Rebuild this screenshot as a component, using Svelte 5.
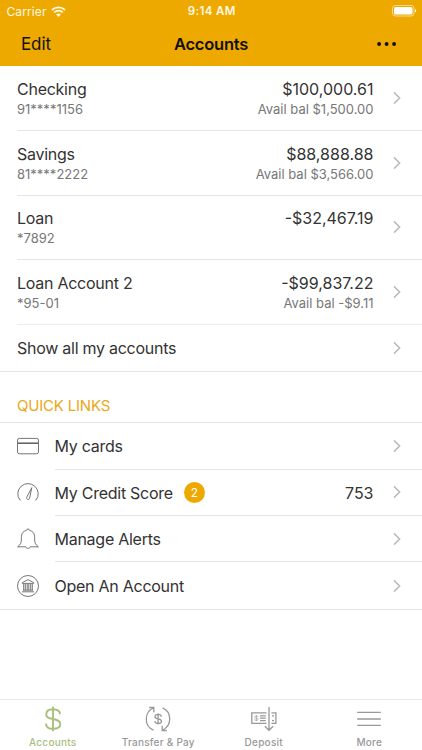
<script lang="ts">
  type Account = {
    name: string;
    number: string;
    balance: string;
    available?: string;
  };

  const accounts: Account[] = [
    { name: "Checking", number: "91****1156", balance: "$100,000.61", available: "$1,500.00" },
    { name: "Savings", number: "81****2222", balance: "$88,888.88", available: "$3,566.00" },
    { name: "Loan", number: "*7892", balance: "-$32,467.19" },
    { name: "Loan Account 2", number: "*95-01", balance: "-$99,837.22", available: "-$9.11" },
  ];

  const links = [
    { icon: "card", label: "My cards" },
    { icon: "gauge", label: "My Credit Score", badge: 2, value: "753" },
    { icon: "bell", label: "Manage Alerts" },
    { icon: "bank", label: "Open An Account" },
  ];

  const tabs = [
    { icon: "dollar", label: "Accounts" },
    { icon: "transfer", label: "Transfer & Pay" },
    { icon: "deposit", label: "Deposit" },
    { icon: "more", label: "More" },
  ];

  let currentTab = $state("Accounts");
</script>

{#snippet chevron()}
  <svg class="chevron" width="8" height="14" viewBox="0 0 8 14">
    <path d="M1 1.4 6.6 7 1 12.6" />
  </svg>
{/snippet}

{#snippet dollar()}
  <path d="M8 0.8V25.2M15 8.3C15 4.7 12 3.2 8 3.2S1.2 5.1 1.2 8.4C1.2 11.6 4 12.2 8 13S15.3 14.6 15.3 18C15.3 21.2 12.2 22.8 8 22.8S1 21 1 17.4" />
{/snippet}

<div class="app">
  <header>
    <div class="status">
      <div class="carrier">
        <span>Carrier</span>
        <svg width="15" height="11" viewBox="0 0 15 11">
          <path d="M0.9 4C4.7 0.5 10.3 0.5 14.1 4M3.2 6.4C5.7 4.1 9.3 4.1 11.8 6.4" />
          <path class="dot" d="M7.5 11 5.1 8.5C6.4 7.2 8.6 7.2 9.9 8.5Z" />
        </svg>
      </div>
      <span class="time">9:14 AM</span>
      <div class="power">
        <svg width="25" height="12" viewBox="0 0 25 12">
          <rect class="case" x="0.5" y="0.5" width="21.5" height="10.5" rx="3" />
          <rect class="charge" x="2" y="2" width="18.5" height="7.5" rx="1.6" />
          <path class="charge" d="M23 4V7.6Q24.2 7 24.2 5.8T23 4Z" />
        </svg>
      </div>
    </div>
    <div class="navbar">
      <button class="edit">Edit</button>
      <h1>Accounts</h1>
      <button class="menu" aria-label="Menu">
        <svg width="20" height="4" viewBox="0 0 20 4">
          <circle cx="2.1" cy="2" r="1.95" />
          <circle cx="9.6" cy="2" r="1.95" />
          <circle cx="17.1" cy="2" r="1.95" />
        </svg>
      </button>
    </div>
  </header>

  <main>
    <ul class="accounts">
      {#each accounts as account}
        <li>
          <div class="info">
            <div class="name">{account.name}</div>
            <div class="sub">{account.number}</div>
          </div>
          <div class="amounts">
            <div class="balance">{account.balance}</div>
            {#if account.available}
              <div class="sub">Avail bal {account.available}</div>
            {/if}
          </div>
          {@render chevron()}
        </li>
      {/each}
    </ul>
    <div class="show-all">
      <span class="name">Show all my accounts</span>
      {@render chevron()}
    </div>

    <h2>QUICK LINKS</h2>
    <ul class="links">
      {#each links as link}
        <li>
          <svg class="icon" width="24" height="24" viewBox="0 0 24 24">
            {#if link.icon === "card"}
              <rect x="1.5" y="4.4" width="21" height="15.4" rx="1.8" />
              <path class="stripe" d="M1.5 9.2H22.5" />
            {:else if link.icon === "gauge"}
              <path d="M4.6 18.9H3.8A10.2 10.2 0 1 1 20.2 18.9H19.4" />
              <path d="M15.8 6.6 10.6 16.6A1.6 1.6 0 0 0 13.5 17.8Z" />
            {:else if link.icon === "bell"}
              <path d="M1.6 19.8C4.8 17.5 5.4 15.5 5.4 11.8V9.6C5.4 6.2 7.4 4.2 10.4 3.4 10.6 1.5 13.4 1.5 13.6 3.4 16.6 4.2 18.6 6.2 18.6 9.6V11.8C18.6 15.5 19.2 17.5 22.4 19.8H14.2C13.8 21.9 10.2 21.9 9.8 19.8Z" />
            {:else}
              <circle cx="12" cy="12" r="10.5" />
              <path d="M6.3 9.4V8.6L12 5.7 17.7 8.6V9.4ZM6 17.8H18M7 16.2H17M7.7 10V16M9.3 10V16M11.2 10V16M12.8 10V16M14.7 10V16M16.3 10V16" />
            {/if}
          </svg>
          <div class="link">
            <span class="name">{link.label}</span>
            {#if link.badge}
              <span class="badge">{link.badge}</span>
            {/if}
            {#if link.value}
              <span class="value">{link.value}</span>
            {/if}
            {@render chevron()}
          </div>
        </li>
      {/each}
    </ul>
  </main>

  <nav>
    {#each tabs as tab}
      <button
        class="tab"
        class:current={currentTab === tab.label}
        onclick={() => (currentTab = tab.label)}
      >
        <svg width="28" height="26" viewBox="0 0 28 26">
          {#if tab.icon === "dollar"}
            <g class="bold" transform="translate(6 0)">{@render dollar()}</g>
          {:else if tab.icon === "transfer"}
            <path d="M9.5 24.2C-0.2 20 0 6.5 9.3 2M5.2 1.5H9.8V6.3M18.5 1.8C28.2 6 28 19.5 18.7 24M22.8 24.5H18.2V19.7" />
            <g class="coin" transform="translate(10.4 7) scale(0.46)">{@render dollar()}</g>
          {:else if tab.icon === "deposit"}
            <path d="M16.5 6.9H1.8V17.4H16.5M21.5 6.9H25.9V17.4H21.5M19 1V23.8M14.8 20.3 19 24.3 23.2 20.3M10 9.9H15.8M10 12.2H15.8M10 14.6H15.8M22 9.9H24M22 14.6H24" />
            <g class="coin" transform="translate(4.5 9) scale(0.24)">{@render dollar()}</g>
          {:else}
            <path d="M2.2 6.4H25.8M2.2 13H25.8M2.2 19.4H25.8" />
          {/if}
        </svg>
        <span>{tab.label}</span>
      </button>
    {/each}
  </nav>
</div>

<style>
  :global(body) {
    margin: 0;
  }
  .app {
    display: flex;
    flex-direction: column;
    width: 422px;
    height: 750px;
    background-color: #fff;
    color: #333;
    font-family: Inter, "Liberation Sans", sans-serif;
    overflow: hidden;
  }
  svg {
    display: block;
    flex: none;
    fill: none;
    stroke: currentColor;
  }
  button {
    padding: 0;
    border: 0;
    background: none;
    color: inherit;
    font: inherit;
  }
  ul {
    margin: 0;
    padding: 0;
    list-style: none;
  }
  header {
    height: 66px;
    background-color: #eea900;
  }
  .status {
    display: grid;
    grid-template-columns: 1fr auto 1fr;
    align-items: center;
    height: 22px;
    padding: 0 5px 0 6.5px;
    color: #fff8e2;
    font-size: 12px;
  }
  .carrier {
    display: flex;
    align-items: center;
    gap: 4.5px;
    letter-spacing: 0.1px;
  }
  .carrier svg {
    stroke-width: 1.9;
  }
  .carrier .dot {
    fill: currentColor;
    stroke: none;
  }
  .time {
    font-size: 11.5px;
    font-weight: 600;
    letter-spacing: 0.35px;
  }
  .power {
    justify-self: end;
  }
  .power .case {
    stroke: #f8d98a;
  }
  .power .charge {
    fill: #fff;
    stroke: none;
  }
  .navbar {
    display: grid;
    grid-template-columns: 1fr auto 1fr;
    align-items: center;
    height: 43px;
    padding: 0 21px;
    color: #111;
  }
  .edit {
    justify-self: start;
    font-size: 17px;
    letter-spacing: -0.1px;
  }
  h1 {
    margin: 0;
    font-size: 16.5px;
    font-weight: 600;
    letter-spacing: -0.25px;
  }
  .menu {
    justify-self: end;
    margin-right: 4px;
  }
  .menu svg {
    fill: #111;
    stroke: none;
  }
  main {
    flex: 1;
  }
  .accounts li {
    display: flex;
    align-items: center;
    box-sizing: border-box;
    height: 64.8px;
    margin-left: 17px;
    padding-right: 21px;
    border-bottom: 1px solid #e6e6e6;
  }
  .accounts li:last-child {
    border-bottom-color: #ececec;
  }
  .info,
  .amounts {
    height: 40px;
  }
  .amounts {
    margin-left: auto;
    text-align: right;
  }
  .name,
  .balance,
  .value {
    font-size: 16px;
    line-height: 23px;
  }
  .name {
    letter-spacing: -0.26px;
  }
  .sub {
    color: #777;
    font-size: 13px;
    line-height: 17px;
  }
  .chevron {
    margin-left: 19.5px;
    color: #bcbcbc;
    stroke-width: 1.6;
  }
  .show-all {
    display: flex;
    align-items: center;
    justify-content: space-between;
    height: 46px;
    padding: 0 21px 0 17px;
    border-bottom: 1px solid #e4e4e4;
  }
  h2 {
    margin: 0;
    padding: 23px 17px 6px;
    color: #e9a820;
    font-size: 15px;
    font-weight: 400;
    letter-spacing: -0.2px;
    line-height: 21px;
  }
  .links {
    border-top: 1px solid #e4e4e4;
    border-bottom: 1px solid #e4e4e4;
  }
  .links li {
    display: flex;
    align-items: center;
    height: 46.4px;
    padding-left: 15.5px;
  }
  .icon {
    color: #666;
    stroke-width: 0.9;
  }
  .icon .stripe {
    stroke-width: 1.6;
  }
  .link {
    display: flex;
    flex: 1;
    align-items: center;
    box-sizing: border-box;
    height: 100%;
    margin-left: 15px;
    padding-right: 21px;
    border-bottom: 1px solid #e6e6e6;
  }
  .link .name,
  .link .value {
    padding-top: 1.5px;
  }
  li:last-child .link {
    border-bottom: 0;
  }
  .link .chevron {
    margin-left: auto;
  }
  .badge {
    width: 21px;
    margin-left: 11px;
    border-radius: 50%;
    background-color: #eea900;
    color: #fff;
    font-size: 12px;
    line-height: 21px;
    text-align: center;
  }
  .value {
    margin-left: auto;
  }
  .link .value + .chevron {
    margin-left: 19.5px;
  }
  nav {
    display: flex;
    box-sizing: border-box;
    height: 51px;
    border-top: 1.5px solid #e8e8e8;
  }
  .tab {
    display: flex;
    flex: 1 1 0;
    flex-direction: column;
    align-items: center;
    padding-top: 6px;
    color: #999;
    font-size: 10px;
    font-weight: 500;
    line-height: 12px;
    letter-spacing: 0.25px;
  }
  .tab span {
    margin-top: 4px;
    white-space: nowrap;
  }
  .tab svg {
    stroke-width: 1.3;
  }
  .tab.current {
    color: #a9c07c;
  }
  .tab .bold {
    stroke-width: 1.9;
  }
  .tab .coin {
    stroke-width: 2.8;
  }
</style>
